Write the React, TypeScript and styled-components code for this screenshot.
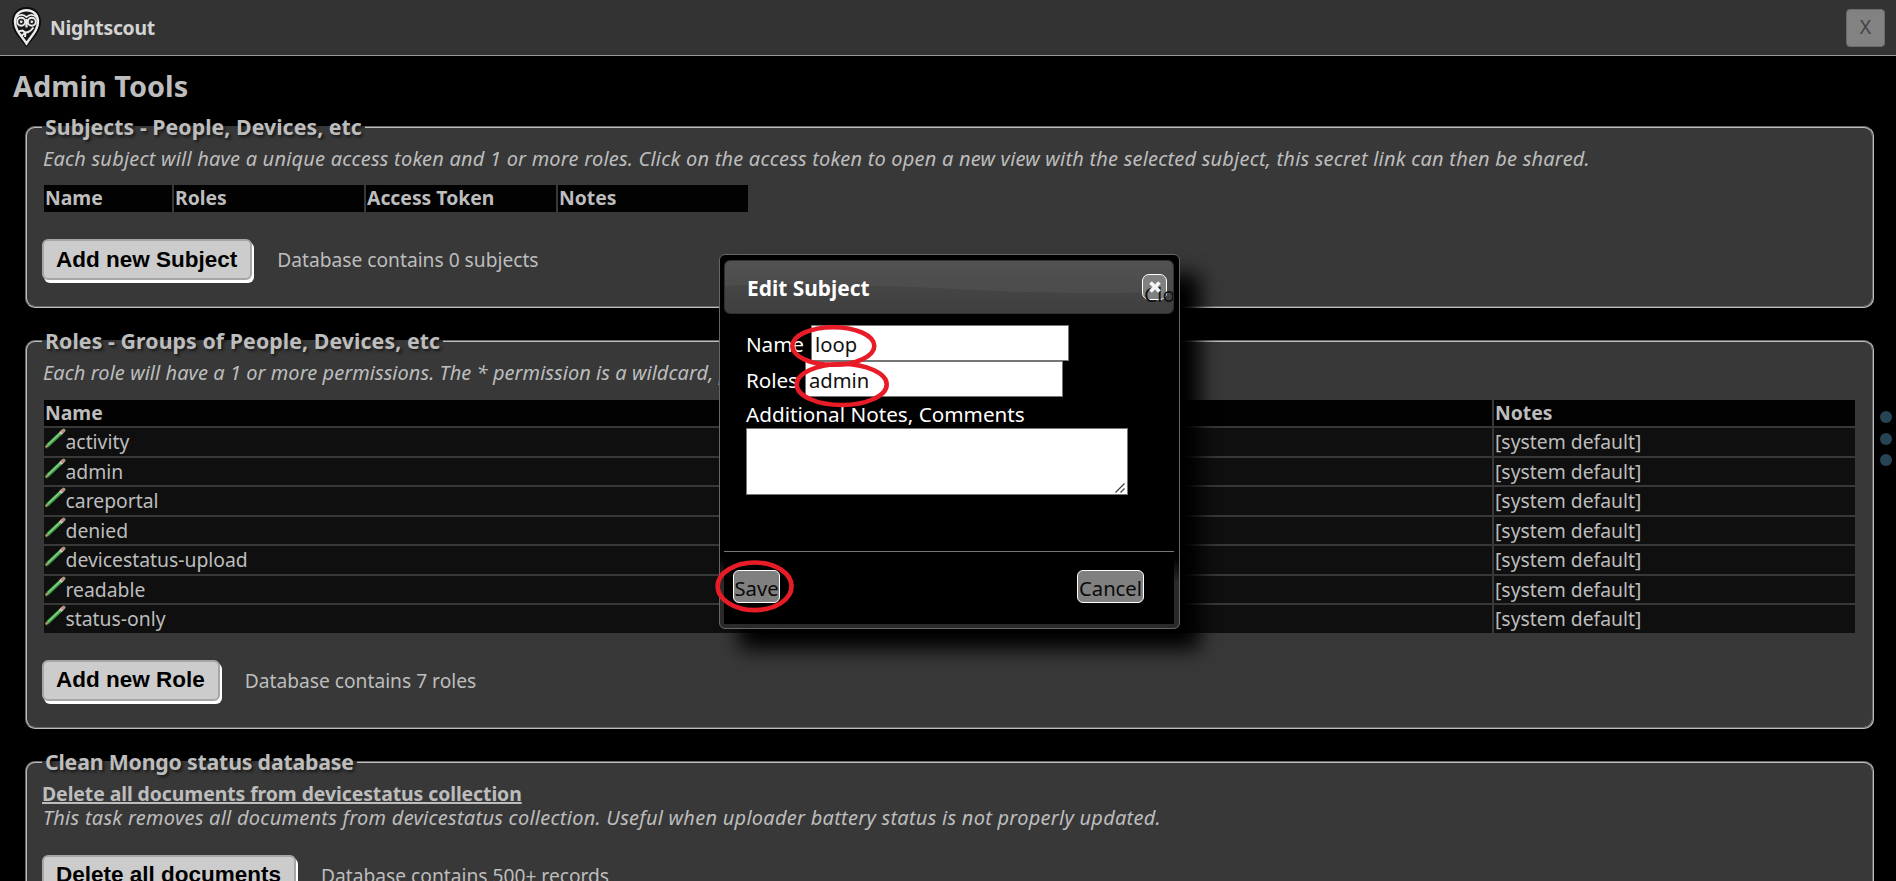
import React from "react";
import styled, { createGlobalStyle } from "styled-components";

const ink = "#bdbdbd";

const GlobalStyle = createGlobalStyle`
  * { box-sizing: border-box; }
  html, body { margin: 0; padding: 0; background: #000; }
  body {
    height: 881px;
    overflow: hidden;
    color: ${ink};
    font-family: "Noto Sans", "Open Sans", sans-serif;
    font-size: 19.35px;
  }
`;

const Page = styled.div`
  position: relative;
  height: 881px;
  overflow: hidden;
  background: #000;
`;

const Toolbar = styled.header`
  display: flex;
  align-items: center;
  height: 56px;
  padding: 0 11px 0 11px;
  background: #333;
  border-bottom: 1px solid #999;
`;

const Brand = styled.span`
  margin-left: 8px;
  font-size: 19.4px;
  font-weight: bold;
  letter-spacing: -0.28px;
  line-height: 27px;
  color: #d3d3d3;
`;

const CloseTools = styled.button`
  width: 39px;
  height: 38px;
  margin-left: auto;
  padding: 0 0 2px;
  border: 1px solid #6c6c6c;
  border-radius: 4px;
  background: #828282;
  color: #444;
  font: 19.4px "Noto Sans", sans-serif;
`;

const Title = styled.h1`
  margin: 10px 0 7px 13px;
  font-size: 28.9px;
  line-height: 40px;
`;

const Group = styled.fieldset`
  width: 1849px;
  margin: 0 0 19px 25px;
  padding: 6px 15px 26px;
  border: 2px groove ${ink};
  border-radius: 10px;
  background: #383838;
`;

const GroupTitle = styled.legend<{ $spacing?: number }>`
  padding: 1px 3px;
  font-size: 21.3px;
  font-weight: bold;
  line-height: 26px;
  letter-spacing: ${(p) => p.$spacing ?? 0.04}px;
  text-shadow: 2px 2px 3px rgba(0, 0, 0, 0.6);
`;

const Hint = styled.p<{ $spacing: number }>`
  margin: 0;
  padding-left: 1px;
  font-size: 20px;
  font-style: italic;
  line-height: 24px;
  letter-spacing: ${(p) => p.$spacing}px;
  white-space: nowrap;
`;

const TaskName = styled.div`
  font-size: 19.4px;
  font-weight: bold;
  line-height: 24px;
  letter-spacing: -0.07px;
  text-decoration: underline;
  text-decoration-thickness: 1.5px;
`;

const Table = styled.div<{ $columns: string; $width?: number; $top: number }>`
  display: grid;
  grid-template-columns: ${(p) => p.$columns};
  gap: 2px;
  width: ${(p) => (p.$width ? `${p.$width}px` : "auto")};
  margin: ${(p) => p.$top}px 2px 0;
`;

const HeadCell = styled.div<{ $height: number }>`
  height: ${(p) => p.$height}px;
  padding-left: 1px;
  background: #020202;
  font-weight: bold;
  line-height: 26px;
`;

const Cell = styled.div`
  display: flex;
  height: 27.57px;
  padding-left: 1px;
  background: #0f0f0f;
  line-height: 27px;
`;

const Actions = styled.div<{ $top?: number }>`
  display: flex;
  gap: 25px;
  height: 41px;
  margin-top: ${(p) => p.$top ?? 27}px;
  font-size: 19.2px;
  line-height: 42px;
`;

const ActionButton = styled.button`
  padding: 0 13px 0 12px;
  border: 2px solid #a6a6a6;
  border-radius: 6px;
  background: #ccc;
  box-shadow: 2px 3px 0 #fff;
  color: #000;
  font: bold 22.5px "Liberation Sans", Arial, sans-serif;
`;

const SideDots = styled.div`
  position: absolute;
  top: 411px;
  right: 4px;
  display: flex;
  flex-direction: column;
  gap: 9.5px;
`;

const Dot = styled.i`
  width: 12px;
  height: 12px;
  border-radius: 50%;
  background: #264554;
`;

const Dialog = styled.section`
  position: absolute;
  left: 719px;
  top: 254px;
  display: flex;
  flex-direction: column;
  width: 461px;
  height: 375px;
  padding: 5px 5px 4px 4px;
  border: 1px solid #666;
  border-radius: 6px;
  background: linear-gradient(to bottom, #000 0, #000 302px, #2a2a2a 328px);
  box-shadow: 20px 20px 20px #000;
  color: #fff;
  font-size: 20.7px;
`;

const DialogBar = styled.div`
  position: relative;
  flex: none;
  height: 54px;
  overflow: hidden;
  border: 1px solid #303030;
  border-radius: 6px;
  background: linear-gradient(to bottom, #4b4b4b, #3f3f3f);
`;

const Gloss = styled.svg`
  display: block;
  width: 100%;
  height: 100%;
`;

const DialogTitle = styled.h2`
  position: absolute;
  left: 22px;
  top: 0;
  margin: 0;
  font-size: 20.9px;
  line-height: 54px;
`;

const DialogClose = styled.button`
  position: absolute;
  right: 6px;
  top: 13px;
  width: 25px;
  height: 26px;
  padding: 0;
  border: 1px solid #fff;
  border-radius: 7px;
  background: #808080;
`;

const CloseLabel = styled.span`
  position: absolute;
  left: 1px;
  top: 6px;
  color: #111;
  font: 20.7px/27px "Noto Sans", sans-serif;
`;

const CrossIcon = styled.svg`
  position: absolute;
  left: 5px;
  top: 5px;
`;

const DialogBody = styled.div`
  flex: 1;
  padding: 11px 0 0 22px;
  background: #000;
`;

const Field = styled.label<{ $label: number }>`
  display: grid;
  grid-template-columns: ${(p) => p.$label}px 258px;
  height: 36px;
  line-height: 39px;
  letter-spacing: -0.1px;
`;

const TextInput = styled.input`
  height: 36px;
  padding: 2px 3px 0;
  border: 1px solid #767676;
  border-radius: 0;
  background: #fff;
  color: #111;
  font: 20.2px "Noto Sans", sans-serif;
`;

const NotesLabel = styled.div`
  padding-top: 3px;
  line-height: 28px;
`;

const NotesBox = styled.div`
  position: relative;
  width: 382px;
`;

const Notes = styled.textarea`
  display: block;
  width: 100%;
  height: 67px;
  border: 1px solid #767676;
  background: #fff;
  resize: none;
`;

const Grip = styled.svg`
  position: absolute;
  right: 3px;
  bottom: 2px;
`;

const ButtonPane = styled.div`
  display: flex;
  flex: none;
  justify-content: space-between;
  height: 73px;
  padding: 18px 30px 0 9px;
  border-top: 1px solid #777;
  background: #000;
`;

const PaneButton = styled.button<{ $width: number }>`
  width: ${(p) => p.$width}px;
  height: 33px;
  padding: 2px 0 0;
  border: 1px solid #fff;
  border-radius: 6px;
  background: #808080;
  color: #0a0a0a;
  font: 20.2px "Noto Sans", sans-serif;
`;

const Marks = styled.svg`
  position: absolute;
  left: 700px;
  top: 310px;
  pointer-events: none;
`;

function OwlLogo() {
  return (
    <svg width="31" height="43" viewBox="0 0 31 43">
      <path d="M15.5 1C7 1 1 7 1 15.500C1 26 9 32 15.500 41.500C22 32 30 26 30 15.500C30 7 24 1 15.500 1Z" fill="#0c0c0c" />
      <path
        d="M15.500 4.200C8.500 4.200 4 9 4 15.500C4 24.500 10.500 29.500 15.500 37.500C20.500 29.500 27 24.500 27 15.500C27 9 22.500 4.200 15.500 4.200Z"
        fill="#191919" stroke="#ececec" strokeWidth="2.4"
      />
      <path d="M5.500 11.500C9 7.300 13 8.800 15.500 11.200C18 8.800 22 7.300 25.500 11.500" fill="none" stroke="#ececec" strokeWidth="1.600" />
      <circle cx="10.200" cy="15.800" r="4" fill="#222" stroke="#ececec" strokeWidth="1.900" />
      <circle cx="20.800" cy="15.800" r="4" fill="#222" stroke="#ececec" strokeWidth="1.900" />
      <circle cx="10.200" cy="15.800" r="1.300" fill="#ececec" />
      <circle cx="20.800" cy="15.800" r="1.300" fill="#ececec" />
      <path d="M15.500 13V21.500" stroke="#ececec" strokeWidth="2.200" />
      <path d="M7 25.500L11.500 24.500C15 28.500 19.500 25.500 22.500 21.500M10.500 29.500L14.500 27L14 31" fill="none" stroke="#ececec" strokeWidth="1.900" />
    </svg>
  );
}

function PencilIcon() {
  return (
    <svg width="20.5" height="21" viewBox="0 0 20.5 21">
      <path d="M1.600 18.500L18.600 2.500" stroke="#1b421b" strokeWidth="4.400" strokeLinecap="round" />
      <path d="M2.600 17.500L16 4.900" stroke="#45a34a" strokeWidth="3.400" />
      <path d="M3 16.600L15.500 4.800" stroke="#93d693" strokeWidth="1.200" />
      <path d="M0.700 19.300L3 17.200" stroke="#b59a72" strokeWidth="2" />
      <path d="M15.500 5.400L17.700 3.300" stroke="#dadada" strokeWidth="3.400" />
      <path d="M17.500 3.500L18.600 2.500" stroke="#c58f88" strokeWidth="3.400" strokeLinecap="round" />
    </svg>
  );
}

const roles: [string, string][] = [
  ["activity", "api:activity:create"],
  ["admin", "*"],
  ["careportal", "api:treatments:create"],
  ["denied", ""],
  ["devicestatus-upload", "api:devicestatus:create"],
  ["readable", "*:*:read"],
  ["status-only", "api:status:read"],
];

export default function App() {
  return (
    <Page>
      <GlobalStyle />
      <Toolbar>
        <OwlLogo />
        <Brand>Nightscout</Brand>
        <CloseTools>X</CloseTools>
      </Toolbar>

      <Title>Admin Tools</Title>

      <Group>
        <GroupTitle>Subjects - People, Devices, etc</GroupTitle>
        <Hint $spacing={0.205}>
          Each subject will have a unique access token and 1 or more roles. Click on the access token to open a new
          view with the selected subject, this secret link can then be shared.
        </Hint>
        <Table $columns="128px 190px 190px 190px" $width={704} $top={14}>
          {["Name", "Roles", "Access Token", "Notes"].map((h) => (
            <HeadCell key={h} $height={27}>{h}</HeadCell>
          ))}
        </Table>
        <Actions>
          <ActionButton>Add new Subject</ActionButton>
          <span>Database contains 0 subjects</span>
        </Actions>
      </Group>

      <Group>
        <GroupTitle $spacing={0.08}>Roles - Groups of People, Devices, etc</GroupTitle>
        <Hint $spacing={0.05}>
          Each role will have a 1 or more permissions. The * permission is a wildcard, permissions are a hierarchy
          using : as a separator.
        </Hint>
        <Table $columns="720px 726px 1fr" $top={15}>
          {["Name", "Permissions", "Notes"].map((h) => (
            <HeadCell key={h} $height={26}>{h}</HeadCell>
          ))}
          {roles.map(([name, permissions]) => (
            <React.Fragment key={name}>
              <Cell>
                <PencilIcon />
                {name}
              </Cell>
              <Cell>{permissions}</Cell>
              <Cell>[system default]</Cell>
            </React.Fragment>
          ))}
        </Table>
        <Actions>
          <ActionButton>Add new Role</ActionButton>
          <span>Database contains 7 roles</span>
        </Actions>
      </Group>

      <Group>
        <GroupTitle $spacing={-0.2}>Clean Mongo status database</GroupTitle>
        <TaskName>Delete all documents from devicestatus collection</TaskName>
        <Hint $spacing={0.26}>
          This task removes all documents from devicestatus collection. Useful when uploader battery status is not
          properly updated.
        </Hint>
        <Actions $top={25}>
          <ActionButton>Delete all documents</ActionButton>
          <span>Database contains 500+ records</span>
        </Actions>
      </Group>

      <SideDots>
        <Dot />
        <Dot />
        <Dot />
      </SideDots>

      <Dialog>
        <DialogBar>
          <Gloss viewBox="0 0 450 52" preserveAspectRatio="none">
            <path d="M0 25C90 21 190 26 270 30C340 33 400 33 450 30V0H0Z" fill="#fff" fillOpacity="0.045" />
          </Gloss>
          <DialogTitle>Edit Subject</DialogTitle>
          <DialogClose>
            <CloseLabel>Close</CloseLabel>
            <CrossIcon width="14" height="14" viewBox="0 0 14 14">
              <path d="M2.500 2.500L11.500 11.500M11.500 2.500L2.500 11.500" stroke="#f4f4f4" strokeWidth="3.800" />
            </CrossIcon>
          </DialogClose>
        </DialogBar>
        <DialogBody>
          <Field $label={65}>
            Name
            <TextInput defaultValue="loop" />
          </Field>
          <Field $label={59}>
            Roles
            <TextInput defaultValue="admin" />
          </Field>
          <NotesLabel>Additional Notes, Comments</NotesLabel>
          <NotesBox>
            <Notes />
            <Grip width="10" height="10" viewBox="0 0 10 10">
              <path d="M0.500 9.500L9.500 0.500M5.500 9.500L9.500 5.500" stroke="#444" strokeWidth="1.300" />
            </Grip>
          </NotesBox>
        </DialogBody>
        <ButtonPane>
          <PaneButton $width={47}>Save</PaneButton>
          <PaneButton $width={67}>Cancel</PaneButton>
        </ButtonPane>
      </Dialog>

      <Marks width="210" height="310" viewBox="0 0 210 310" fill="none" stroke="#e81c27" strokeWidth="4.6">
        <ellipse cx="133.300" cy="36" rx="41" ry="18.800" />
        <ellipse cx="141.700" cy="74.500" rx="45" ry="20.500" />
        <ellipse cx="54.600" cy="276.300" rx="37" ry="23.800" />
      </Marks>
    </Page>
  );
}
